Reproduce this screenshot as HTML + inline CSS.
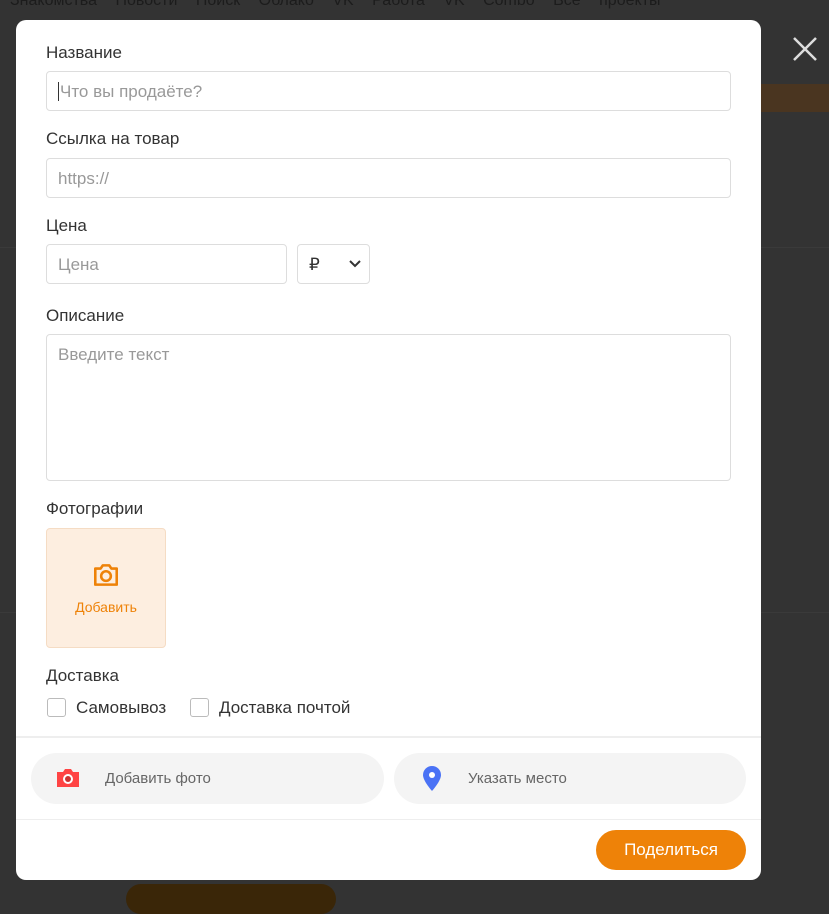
<!DOCTYPE html>
<html><head><meta charset="utf-8"><style>
*{box-sizing:border-box;margin:0;padding:0}
html,body{width:829px;height:897px}
body{background:#333;font-family:"Liberation Sans",sans-serif;position:relative;overflow:hidden}
.nav{position:absolute;top:-8px;left:10px;color:#1c1c1c;font-size:16px;word-spacing:14px;white-space:nowrap}
.bgstrip{position:absolute;left:761px;top:84px;width:68px;height:28px;background:#4a3520}
.bgline{position:absolute;left:0;width:829px;height:1px;background:#3a3a3a}
.modal{position:absolute;left:16px;top:20px;width:745px;height:860px;background:#fff;border-radius:10px}
.lbl{position:absolute;left:30px;font-size:17px;color:#333}
.inp{position:absolute;left:30px;border:1px solid #ddd;border-radius:4px;height:40px;font-size:17px;color:#999;padding:10px 11px}
.close{position:absolute;left:792px;top:36px}
.btn{position:absolute;top:733px;height:51px;border-radius:26px;background:#f4f4f4;font-size:15px;color:#666}
</style></head><body>
<div class="nav">Знакомства Новости Поиск Облако VK Работа VK Combo Все проекты</div>
<div class="bgstrip"></div>
<div class="bgline" style="top:247px"></div>
<div class="bgline" style="top:612px"></div>
<div style="position:absolute;left:126px;top:884px;width:210px;height:30px;border-radius:15px;background:#3a2608"></div>
<svg class="close" width="26" height="26" viewBox="0 0 26 26"><path d="M2 2L24 24M24 2L2 24" stroke="#ddd" stroke-width="2.5"/></svg>
<div class="modal">
<div class="lbl" style="top:23px">Название</div>
<div class="inp" style="top:51px;width:685px"><span style="border-left:1px solid #333;padding-left:1px">Что вы продаёте?</span></div>
<div class="lbl" style="top:109px">Ссылка на товар</div>
<div class="inp" style="top:138px;width:685px">https://</div>
<div class="lbl" style="top:196px">Цена</div>
<div class="inp" style="top:224px;width:241px">Цена</div>
<div class="inp" style="top:224px;left:281px;width:73px;color:#333">₽<svg style="position:absolute;right:8px;top:15px" width="12" height="8" viewBox="0 0 12 8"><path d="M1 1L6 6L11 1" stroke="#333" stroke-width="2" fill="none"/></svg></div>
<div class="lbl" style="top:286px">Описание</div>
<div class="inp" style="top:314px;width:685px;height:147px">Введите текст</div>
<div class="lbl" style="top:479px">Фотографии</div>
<div style="position:absolute;left:30px;top:508px;width:120px;height:120px;background:#fdeee0;border:1px solid #f5dcc4;border-radius:4px;text-align:center;color:#ee8208;font-size:14px">
<svg style="margin-top:31px" width="30" height="30" viewBox="0 0 28 28"><path d="M4 8h5l2-3h6l2 3h5v15H4z" fill="none" stroke="#ee8208" stroke-width="2.4" stroke-linejoin="round"/><circle cx="14" cy="15" r="4.5" fill="none" stroke="#ee8208" stroke-width="2.4"/></svg>
<div style="margin-top:6px">Добавить</div></div>
<div class="lbl" style="top:646px">Доставка</div>
<div style="position:absolute;left:31px;top:678px;width:19px;height:19px;border:1px solid #bbb;border-radius:3px"></div>
<div class="lbl" style="left:60px;top:678px">Самовывоз</div>
<div style="position:absolute;left:174px;top:678px;width:19px;height:19px;border:1px solid #bbb;border-radius:3px"></div>
<div class="lbl" style="left:203px;top:678px">Доставка почтой</div>
<div style="position:absolute;left:0;top:716px;width:745px;height:2px;background:#eee"></div>
<div class="btn" style="left:15px;width:353px"><svg style="position:absolute;left:24px;top:14px" width="26" height="22" viewBox="0 0 26 22"><path d="M2 5h6l2-3h6l2 3h6v15H2z" fill="#f44" /><circle cx="13" cy="12" r="5" fill="#fff"/><circle cx="13" cy="12" r="3" fill="#c33"/></svg><span style="position:absolute;left:74px;top:17px">Добавить фото</span></div>
<div class="btn" style="left:378px;width:352px"><svg style="position:absolute;left:28px;top:13px" width="20" height="26" viewBox="0 0 20 26"><path d="M10 25C10 25 1 15 1 9a9 9 0 0118 0c0 6-9 16-9 16z" fill="#4a72f5"/><circle cx="10" cy="9" r="3" fill="#fff"/></svg><span style="position:absolute;left:74px;top:17px">Указать место</span></div>
<div style="position:absolute;left:0;top:799px;width:745px;height:1px;background:#eee"></div>
<div style="position:absolute;left:580px;top:810px;width:150px;height:40px;border-radius:20px;background:#ee8208;color:#fff;font-size:17px;text-align:center;line-height:40px">Поделиться</div>
</div>
</body></html>
